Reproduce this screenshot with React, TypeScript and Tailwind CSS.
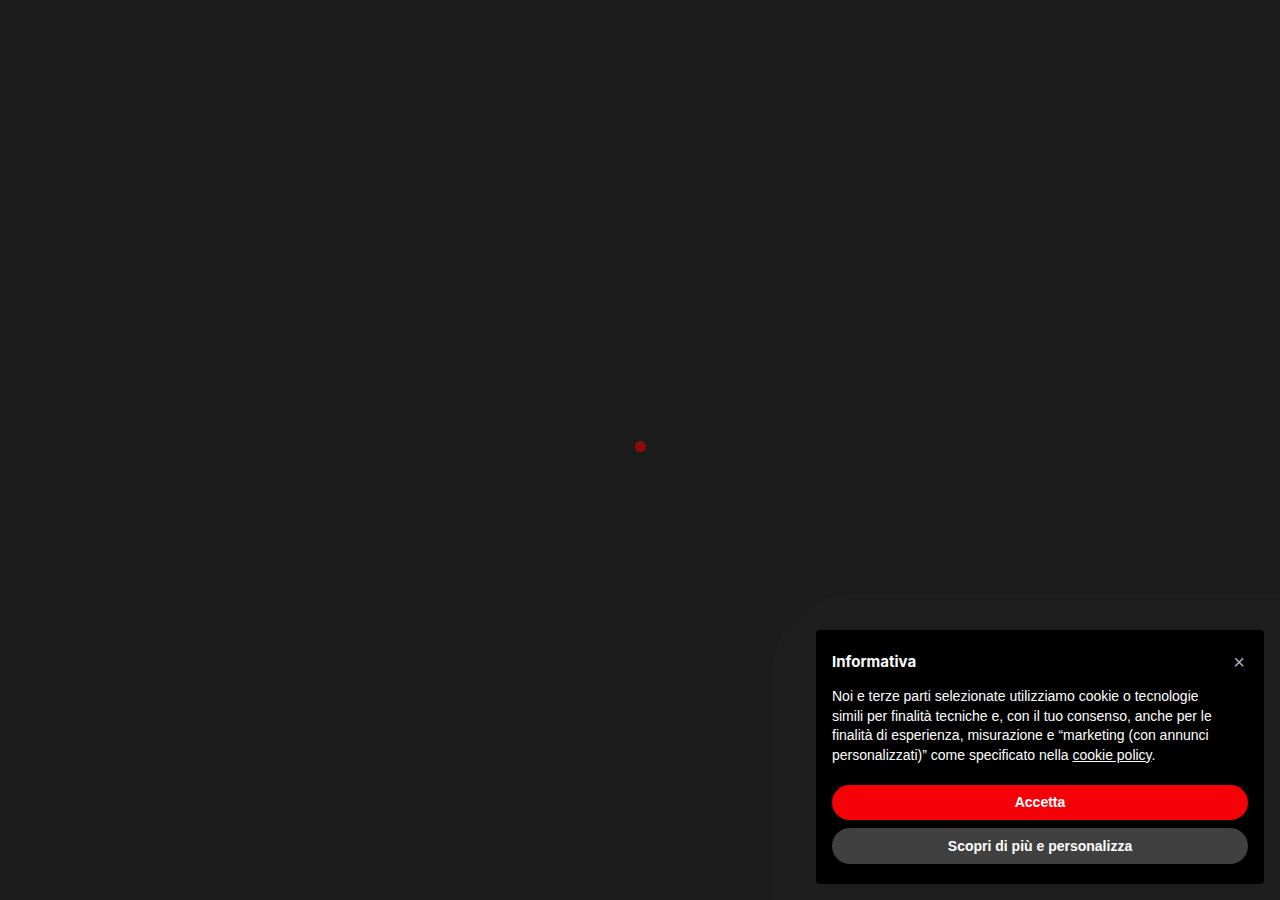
import React from 'react';

const App: React.FC = () => {
  return (
    <div className="relative w-full h-[900px] bg-[#1c1c1c] overflow-hidden" style={{ fontFamily: '"Liberation Sans", Arial, sans-serif' }}>
      {/* Loader dot */}
      <div className="absolute left-[635px] top-[441px] w-[11px] h-[11px] rounded-full bg-[#8e0b0b]" />

      {/* faint glow panel behind banner */}
      <div className="absolute left-[772px] top-[594px] w-[600px] h-[400px] rounded-[80px] bg-[#1e1e1e]" />

      {/* Cookie banner */}
      <div className="absolute left-[816px] top-[630px] w-[448px] bg-black rounded-[4px] px-4 pt-4 pb-5">
        <div className="flex items-start justify-between">
          <h2 className="text-white text-[15px] font-bold leading-[32px]" style={{ fontFamily: 'Inter, "Noto Sans", sans-serif' }}>
            Informativa
          </h2>
          <button className="text-[#b0b0b0] text-[20px] leading-[32px] mr-[3px]">×</button>
        </div>
        <div className="mt-[9px] pr-8 text-white text-[14px] leading-[19.6px]">
          Noi e terze parti selezionate utilizziamo cookie o tecnologie simili per finalità tecniche e, con il tuo consenso, anche per le finalità di esperienza, misurazione e “marketing (con annunci personalizzati)” come specificato nella <span className="underline">cookie policy</span>.
        </div>
        <div className="mt-[20px] flex flex-col gap-2">
          <button className="h-[35px] w-full rounded-full bg-[#f50007] text-white text-[14px] font-bold">Accetta</button>
          <button className="h-[36px] w-full rounded-full bg-[#404040] text-white text-[14px] font-bold">Scopri di più e personalizza</button>
        </div>
      </div>
    </div>
  );
};

export default App;
